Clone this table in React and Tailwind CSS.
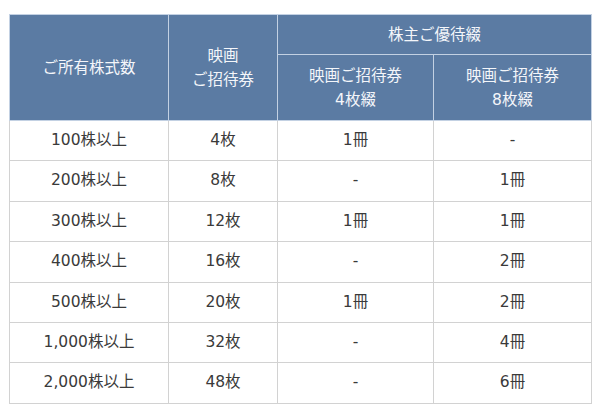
export default function App() {
  const rows = [
    ["100株以上", "4枚", "1冊", "-"],
    ["200株以上", "8枚", "-", "1冊"],
    ["300株以上", "12枚", "1冊", "1冊"],
    ["400株以上", "16枚", "-", "2冊"],
    ["500株以上", "20枚", "1冊", "2冊"],
    ["1,000株以上", "32枚", "-", "4冊"],
    ["2,000株以上", "48枚", "-", "6冊"],
  ];
  const th = "bg-[#5b7ba3] text-[#f4f6fa] font-normal border border-[#c3d1e3] text-center leading-[24px] text-[15.5px]";
  const td = "border border-[#d2d2d2] text-center text-[#3a3a3a] h-[40.4px] p-0";
  return (
    <div
      className="w-[600px] h-[415px] bg-white pt-[14px] pl-[9px]"
      style={{ fontFamily: '"DejaVu Sans", "Noto Sans CJK JP", sans-serif' }}
    >
      <table className="border-collapse table-fixed w-[582px] text-[15.5px]">
        <colgroup>
          <col className="w-[159px]" />
          <col className="w-[109px]" />
          <col className="w-[156px]" />
          <col className="w-[158px]" />
        </colgroup>
        <thead>
          <tr className="h-[40px]">
            <th rowSpan={2} className={th}>ご所有株式数</th>
            <th rowSpan={2} className={th}>映画<br />ご招待券</th>
            <th colSpan={2} className={th}>株主ご優待綴</th>
          </tr>
          <tr className="h-[66px]">
            <th className={th}>映画ご招待券<br />4枚綴</th>
            <th className={th}>映画ご招待券<br />8枚綴</th>
          </tr>
        </thead>
        <tbody>
          {rows.map((r, i) => (
            <tr key={i}>
              {r.map((c, j) => (
                <td key={j} className={td}>{c}</td>
              ))}
            </tr>
          ))}
        </tbody>
      </table>
    </div>
  );
}
